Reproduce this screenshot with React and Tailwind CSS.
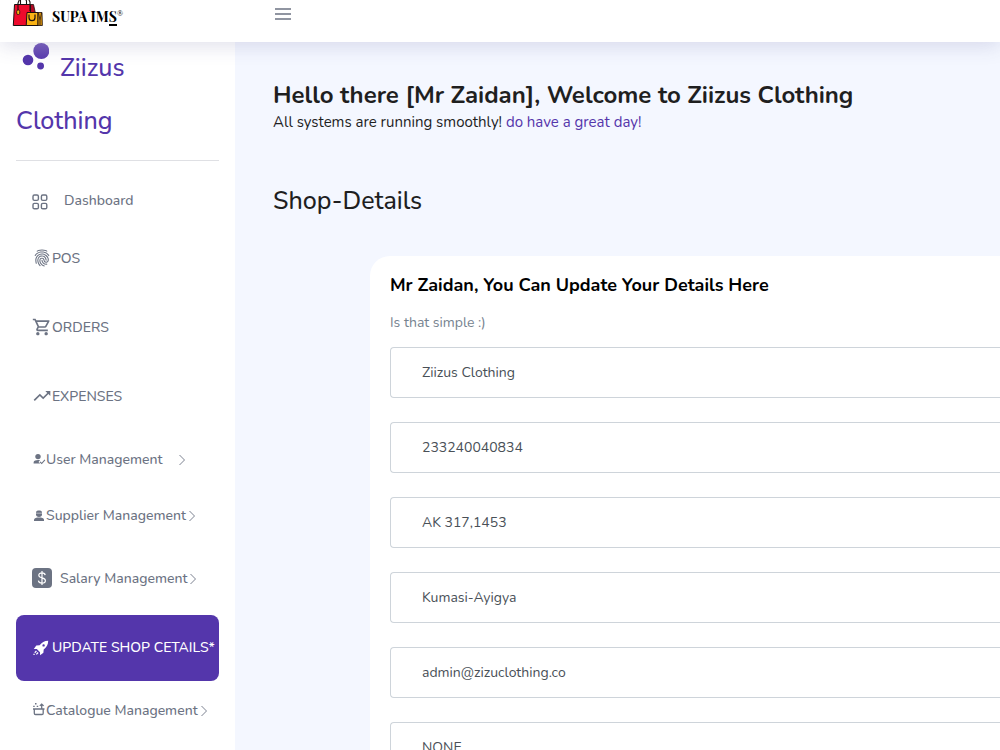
import { IoFingerPrint } from 'react-icons/io5'
import { MdOutlineShoppingCart, MdTrendingUp } from 'react-icons/md'

function GridIcon() {
  return (
    <svg className="w-4 h-4 mt-0.5" viewBox="0 0 16 16" fill="none" stroke="currentColor" strokeWidth="1.4" aria-hidden="true">
      <rect x="1" y="1" width="5.4" height="5.4" rx="1.4" />
      <rect x="9.4" y="1" width="5.4" height="5.4" rx="1.4" />
      <rect x="1" y="9.4" width="5.4" height="5.4" rx="1.4" />
      <rect x="9.4" y="9.4" width="5.4" height="5.4" rx="1.4" />
    </svg>
  )
}

function DollarIcon() {
  return (
    <svg className="w-5 h-5 -mt-0.5" viewBox="0 0 20 20" aria-hidden="true">
      <rect width="20" height="20" rx="4" fill="#6c7383" />
      <path d="M13.2 7.1C13 5.6 11.8 4.9 10 4.9S6.8 5.7 6.8 7.3c0 3.5 6.6 1.6 6.6 5.2 0 1.7-1.5 2.6-3.4 2.6s-3.4-.8-3.6-2.5M10 3v14" fill="none" stroke="#fff" strokeWidth="1.2" />
    </svg>
  )
}

function UserCheckIcon() {
  return (
    <svg className="w-[14px] h-3 -mt-0.5" viewBox="0 0 14 12" fill="currentColor" aria-hidden="true">
      <circle cx="6" cy="3.6" r="2.7" />
      <path d="M1.6 10.6V9.4c0-1.6 2.3-2.3 4.6-2.3.7 0 1.3.1 1.8.2L6.5 8.9l1.7 1.7z" />
      <path d="M8 8.9l1.7 1.6 3.2-3.6" fill="none" stroke="currentColor" strokeWidth="1.1" />
    </svg>
  )
}

function SupplierIcon() {
  return (
    <svg className="w-[14px] h-3" viewBox="0 0 14 12" fill="currentColor" aria-hidden="true">
      <path d="M4 2.6C4 1.2 5.3.6 7 .6s3 .6 3 2v1.6a3 2.7 0 0 1-6 0z" />
      <path d="M4 3.2h6" stroke="#fff" strokeWidth="0.5" />
      <path d="M2 11V9.7C2 8 4.6 7.4 7 7.4s5 .6 5 2.3V11z" />
    </svg>
  )
}

function RocketIcon() {
  return (
    <svg className="w-4 h-4 mx-0.5 -ml-[-1px] mr-[3px]" viewBox="0 0 16 16" fill="currentColor" aria-hidden="true">
      <path fillRule="evenodd" d="M15.2.8C11.4.9 8.6 2.6 6.6 5.3L3.3 5.6.8 8.9l3 .2 3.2 3.2.1 3 3.3-2.5.3-3.3c2.8-2 4.5-4.9 4.5-8.7zM10.6 4.2a1.2 1.2 0 1 1 0 2.4 1.2 1.2 0 0 1 0-2.4z" />
      <path d="M3 10.6l.9.9-1.7 1.7-.9-.9zM4.7 12.1l.9.9-1.8 1.8-.9-.9zM.4 13.8h1.3v1.3H.4z" />
    </svg>
  )
}

function BasketIcon() {
  return (
    <svg className="w-[14px] h-[14px] -mt-[3px]" viewBox="0 0 14 14" fill="none" stroke="currentColor" aria-hidden="true">
      <path d="M1 7h11.5M2.3 7.2v4.1c0 .8.5 1.2 1.2 1.2H10c.8 0 1.2-.5 1.2-1.2V7.2M9.7 6.5V2.2M7.8 3.9l1.9-1.8 1.9 1.8" strokeWidth="1.3" />
      <path d="M3 1.7h1.5M1.2 4.4h1.5M4.7 4.4h1.5" strokeWidth="1.4" />
    </svg>
  )
}

function Chevron() {
  return (
    <svg className="w-2 h-3" viewBox="0 0 8 12" fill="none" stroke="currentColor" strokeWidth="0.9" aria-hidden="true">
      <path d="M1.5 1l5 5-5 5" />
    </svg>
  )
}

function BagsLogo() {
  return (
    <svg className="w-[31px] h-[27px]" viewBox="0 0 31 27" stroke="#1c1010" aria-hidden="true">
      <path d="M2.5 4.5h16V25.5H1.3z" fill="#ee0a2c" />
      <path d="M18.5 4.5h3l2 9v12h-5z" fill="#b00722" strokeWidth="0.8" />
      <path d="M6 11V3l1.7-4M8.5 4V0M14.5 4.5V1L13-2M18 11V2l-1.5-3" fill="none" strokeWidth="1.1" />
      <rect x="4.7" y="10" width="3" height="4.5" rx="1.3" fill="#f9b012" strokeWidth="0.8" />
      <path d="M15 12.5h11v13H14.2z" fill="#fbb315" />
      <path d="M26 12.5h4l.4 13H26z" fill="#d8920c" strokeWidth="0.8" />
      <path d="M26.3 12.8l1.7 7 1.7-7M28 19.8v5.5" fill="none" strokeWidth="0.7" />
      <path d="M17 14.5v3.2a3 3 0 0 0 6 0v-3.2" fill="none" strokeWidth="1.2" />
    </svg>
  )
}

function BubblesLogo() {
  return (
    <svg className="inline-block align-baseline w-[27px] h-[28px] ml-[6px] mr-[11px] mb-[5px]" viewBox="0 0 27 28" aria-hidden="true">
      <defs>
        <linearGradient id="bubble" x1="0" y1="0" x2="0" y2="1">
          <stop offset="0" stopColor="#7b62bd" />
          <stop offset="1" stopColor="#5a3cae" />
        </linearGradient>
      </defs>
      <circle cx="19.3" cy="8" r="8" fill="url(#bubble)" />
      <circle cx="6" cy="17" r="5.3" fill="#5436ab" />
      <circle cx="18.6" cy="23" r="3.4" fill="#5436ab" />
    </svg>
  )
}

const menu = [
  { label: 'Dashboard', icon: <GridIcon />, row: 'h-11 gap-4' },
  { label: 'POS', icon: <IoFingerPrint className="w-5 h-[18px] -mt-0.5" />, row: 'h-[66px]' },
  { label: 'ORDERS', icon: <MdOutlineShoppingCart className="w-5 h-5 -mt-0.5" />, row: 'h-[66px]' },
  { label: 'EXPENSES', icon: <MdTrendingUp className="w-5 h-5 -mt-0.5" />, row: 'h-[66px]' },
  { label: 'User Management', icon: <UserCheckIcon />, row: 'h-[53px]', arrow: 'ml-4' },
  { label: 'Supplier Management', icon: <SupplierIcon />, row: 'h-[53px]', arrow: 'ml-[2px]' },
  { label: 'Salary Management', icon: <DollarIcon />, row: 'h-[67px] gap-2', arrow: '-ml-[6px]' },
  { label: 'UPDATE SHOP CETAILS*', icon: <RocketIcon />, row: 'h-[66px]', active: true },
  { label: 'Catalogue Management', icon: <BasketIcon />, row: 'h-[53px]', arrow: 'ml-[2px]' },
]

const fields = [
  { name: 'Shop name', value: 'Ziizus Clothing' },
  { name: 'Phone', value: '233240040834' },
  { name: 'Address', value: 'AK 317,1453' },
  { name: 'Location', value: 'Kumasi-Ayigya' },
  { name: 'Email', value: 'admin@zizuclothing.co' },
  { name: 'Website', value: 'NONE' },
]

function Header() {
  return (
    <header className="relative z-10 h-[42px] shrink-0 bg-white flex items-start shadow-[0_4px_20px_rgba(60,60,130,0.16)]">
      <a href="#" className="w-[235px] flex items-start pl-3 gap-[9px]">
        <BagsLogo />
        <span className="flex pt-2 font-['Playfair_Display','Liberation_Serif',serif] text-[14px] leading-[18px] font-bold text-black whitespace-nowrap">
          SUPA IM<span className="h-[18px] border-b-2 border-black">S</span>
          <span className="font-['Liberation_Serif',serif] font-normal text-[8px] leading-3">®</span>
        </span>
      </a>
      <button type="button" aria-label="Toggle menu" className="ml-10 mt-2 text-[#6c7383]">
        <svg className="w-4 h-3" viewBox="0 0 16 12" stroke="currentColor" strokeWidth="1.4" aria-hidden="true">
          <path d="M0 1h16M0 6h16M0 11h16" />
        </svg>
      </button>
    </header>
  )
}

function Sidebar() {
  return (
    <aside className="w-[235px] shrink-0 bg-white px-4">
      <a href="#" className="block h-[118px] text-[25px] leading-[53px] font-medium text-[#5436ab]">
        <BubblesLogo />
        Ziizus
        <br />
        Clothing
      </a>
      <hr className="border-[#dfe0e4]" />
      <nav className="mt-[18px] flex flex-col gap-[3px]">
        {menu.map((item) => (
          <a
            key={item.label}
            href="#"
            className={`flex items-center pl-4 rounded-lg text-[14px] leading-5 font-medium whitespace-nowrap ${item.row} ${item.active ? 'bg-[#5436ab] text-white' : 'text-[#6c7383]'}`}>
            {item.icon}
            <span>{item.label}</span>
            {item.arrow && <span className={item.arrow}><Chevron /></span>}
          </a>
        ))}
      </nav>
    </aside>
  )
}

export default function App() {
  return (
    <div className="h-screen overflow-hidden flex flex-col bg-[#f4f7ff] font-['Nunito','Open_Sans',sans-serif]">
      <Header />
      <div className="flex flex-1 min-h-0">
        <Sidebar />
        <main className="flex-1 min-w-0 pl-[38px] pt-[38px] text-[#1f1f1f]">
          <h1 className="text-[24px] leading-[30px] font-bold whitespace-nowrap">
            Hello there [Mr Zaidan], Welcome to Ziizus Clothing
          </h1>
          <p className="text-[15px] leading-6">
            All systems are running smoothly! <span className="text-[#5436ab]">do have a great day!</span>
          </p>
          <h2 className="mt-[52px] text-[25px] leading-[30px] font-medium">Shop-Details</h2>
          <form className="mt-10 ml-[97px] pl-5 pt-4 bg-white rounded-tl-[20px]">
            <h3 className="text-[18px] leading-[26px] font-bold text-black whitespace-nowrap">
              Mr Zaidan, You Can Update Your Details Here
            </h3>
            <p className="mt-[15px] mb-[14px] text-[14px] leading-5 text-[#76838f]">Is that simple :)</p>
            <div className="flex flex-col gap-6">
              {fields.map((field) => (
                <input
                  key={field.name}
                  type="text"
                  aria-label={field.name}
                  defaultValue={field.value}
                  className="h-[51px] w-full pl-[31px] rounded-l border border-r-0 border-[#ced4da] bg-white text-[14px] text-[#495057]"
                />
              ))}
            </div>
          </form>
        </main>
      </div>
    </div>
  )
}
